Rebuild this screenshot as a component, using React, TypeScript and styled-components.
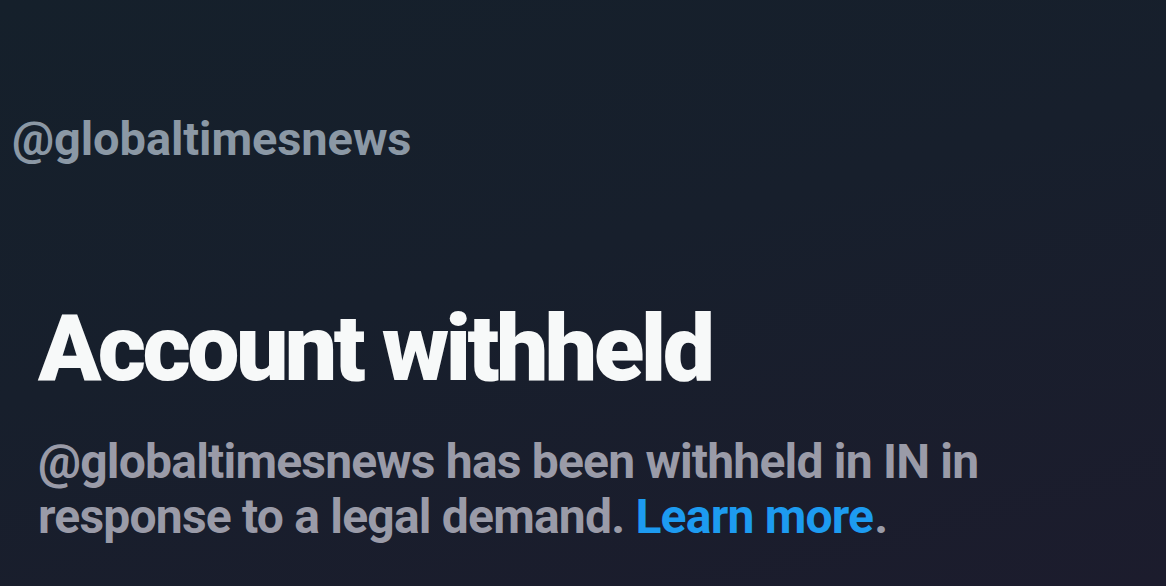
import styled, { createGlobalStyle } from 'styled-components';

const GlobalStyle = createGlobalStyle`
  html, body {
    margin: 0;
    padding: 0;
    background: #171e2c;
  }
  body {
    font-family: Roboto, "Liberation Sans", sans-serif;
  }
`;

const Page = styled.div`
  width: 1166px;
  height: 586px;
  overflow: hidden;
  background: linear-gradient(165deg, #15202b 0%, #171f2c 45%, #1c1c2d 100%);
  display: flex;
  flex-direction: column;
`;

const Handle = styled.div`
  margin: 109px 0 0 12px;
  font-size: 47px;
  line-height: 60px;
  font-weight: 700;
  color: #8b98a5;
  letter-spacing: -0.1px;
`;

const Notice = styled.section`
  padding: 0 0 0 38px;
  margin-top: 127px;
  display: flex;
  flex-direction: column;
  gap: 32px;
`;

const Title = styled.h1`
  margin: 0;
  font-size: 93px;
  line-height: 106px;
  font-weight: 900;
  color: #f7f9f9;
  letter-spacing: -3.6px;
`;

const Message = styled.p`
  margin: 0;
  width: 980px;
  font-size: 48px;
  line-height: 55px;
  font-weight: 700;
  color: #9a9ba8;
  letter-spacing: -0.8px;
`;

const Link = styled.a`
  color: #1d9bf0;
  text-decoration: none;
  margin-right: 1px;
`;

const App = () => {
  return (
    <>
      <GlobalStyle />
      <Page>
        <Handle>@globaltimesnews</Handle>
        <Notice>
          <Title>Account withheld</Title>
          <Message>
            @globaltimesnews has been withheld in IN in response to a legal demand.{' '}
            <Link href="#">Learn more</Link>
            <span>.</span>
          </Message>
        </Notice>
      </Page>
    </>
  );
};

export default App;
